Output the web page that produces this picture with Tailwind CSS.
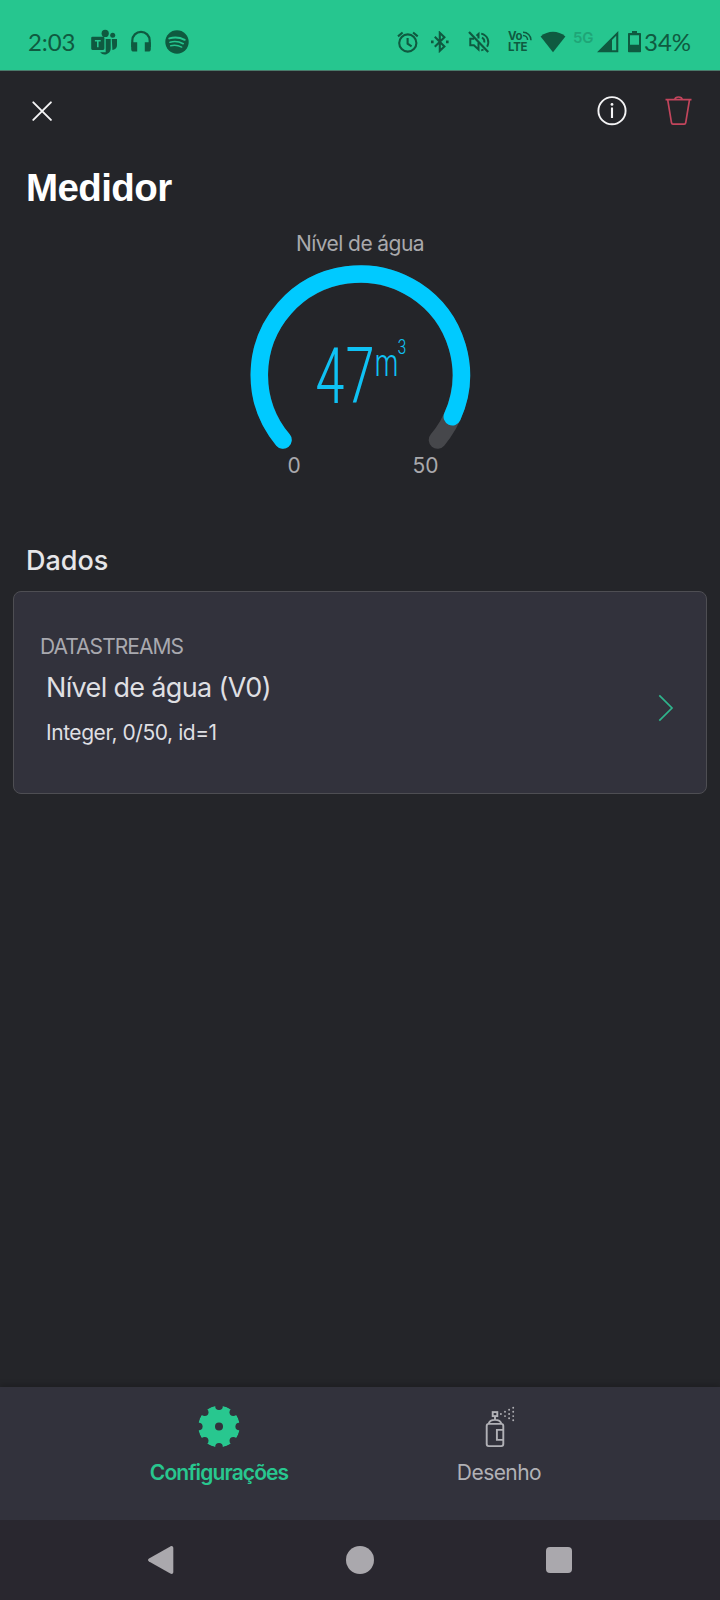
<!DOCTYPE html>
<html lang="pt-BR">
<head>
<meta charset="utf-8">
<meta name="viewport" content="width=device-width, initial-scale=1">
<title>Medidor</title>
<script src="https://cdn.jsdelivr.net/npm/@tailwindcss/browser@4"></script>
</head>
<body class="flex h-[1600px] w-[720px] flex-col overflow-hidden bg-[#242529] font-['Inter',sans-serif]">

  <!-- Status bar -->
  <header class="h-[71px] shrink-0 border-b border-[#4a7a6a] bg-[#26c68f] text-[#0f5a40]">
    <div class="flex h-[70px] items-center pt-[14px] pr-[28px] pl-[28px]">
      <span class="w-[63px] font-['Lato',sans-serif] text-[24px] leading-6 tracking-[-0.1px]">2:03</span>
      <!-- Teams -->
      <svg class="h-7 w-7 shrink-0" viewBox="0 0 28 28" fill="currentColor">
        <circle cx="14.2" cy="5.4" r="3.6"/><circle cx="21.7" cy="7.3" r="2.5"/>
        <path d="M14.7 11h5v10a6 6 0 0 1-10.6 3.2h5.6z"/>
        <path d="M20.8 11H26v6.2a4.6 4.6 0 0 1-4.6 4.8z"/>
        <path fill-rule="evenodd" d="M1.5 8.7h10.6a1.3 1.3 0 0 1 1.3 1.3v10.6a1.3 1.3 0 0 1-1.3 1.3H1.5a1.3 1.3 0 0 1-1.3-1.3V10a1.3 1.3 0 0 1 1.300-1.300zM3.900 12v1.400h2.100v5.900h1.600v-5.900h2.100V12z"/>
      </svg>
      <!-- Headphones -->
      <svg class="ml-[12px] h-7 w-[20px] shrink-0" viewBox="0 0 20 28">
        <path d="M1.300 19V12.500a8.700 8.700 0 0 1 17.400 0V19" fill="none" stroke="currentColor" stroke-width="2.200"/>
        <path d="M0.200 14.200h6v9.300H2.800A2.600 2.600 0 0 1 .2 20.900zM13.800 14.200h6v6.700a2.600 2.600 0 0 1-2.600 2.600h-3.400z" fill="currentColor"/>
      </svg>
      <!-- Spotify -->
      <svg class="ml-[14px] h-6 w-6 shrink-0" viewBox="0 0 24 24">
        <circle cx="12" cy="12" r="11.700" fill="currentColor"/>
        <g fill="none" stroke="#26c68f" stroke-linecap="round"><path d="M4.300 8.400c5-1.500 10.800-1 15.400 1.400" stroke-width="2"/><path d="M5 12.200c4.300-1.200 9.100-.7 13.200 1.500" stroke-width="1.700"/><path d="M5.700 15.800c3.600-.9 7.500-.5 11 1.300" stroke-width="1.400"/></g>
      </svg>
      <div class="flex-1"></div>
      <!-- Alarm -->
      <svg class="h-[22px] w-[22px] shrink-0" viewBox="0 0 22 22" fill="none" stroke="currentColor" stroke-width="2.100">
        <circle cx="10.800" cy="12" r="8.600"/><path d="M10.600 7v5.600l4 2.800M1 5.400l4.600-3.900M20.700 5.400l-4.600-3.900"/>
      </svg>
      <!-- Bluetooth -->
      <svg class="ml-[11px] h-[22px] w-[20px] shrink-0" viewBox="0 0 20 22" fill="none" stroke="currentColor" stroke-width="2.100">
        <path d="M4.800 5.800l9.600 9.600-4.600 4.400V1.800l4.600 4.400-9.600 9.600"/>
        <path d="M1 10.900h2.600M16 10.900h2.600" stroke-width="2.600"/>
      </svg>
      <!-- Muted -->
      <svg class="ml-[17px] h-[22px] w-[24px] shrink-0" viewBox="0 0 24 22" fill="none" stroke="currentColor" stroke-width="2">
        <path d="M2 1L21.200 20.900" stroke-width="2.200"/>
        <path d="M7 7.800H3.300v6.400h3.600l4.600 4.200v-6.700M9.500 4.700l2-1.800v4.600"/>
        <path d="M14.200 2.600c6.700 1.700 8.600 8 5.900 13.200M14.900 6.600c2.100.9 2.700 2.900 2.400 4.900M14.200 19.400c.8-.2 1.600-.5 2.300-.9" stroke-width="1.900"/>
      </svg>
      <!-- VoLTE -->
      <div class="ml-[17px] flex w-[26px] shrink-0 flex-col text-[11.500px] leading-[11px] font-bold">
        <div class="flex"><span class="tracking-[-0.4px]">Vo</span>
          <svg class="h-[10px] w-[10px] shrink-0" viewBox="0 0 10 10" fill="none" stroke="currentColor" stroke-width="1.500"><path d="M1 1.200c4.500 0 8 3.400 8 8M1 4.500c2.600 0 4.600 2 4.600 4.600"/></svg>
        </div>
        <span class="tracking-[-0.300px]">LTE</span>
      </div>
      <!-- Wi-Fi -->
      <svg class="ml-[6px] h-[22px] w-[26px] shrink-0" viewBox="0 0 26 22" fill="currentColor"><path d="M13 21.200L.6 5.400C8-.8 18-.8 25.400 5.400z"/></svg>
      <span class="ml-[7px] w-[21px] shrink-0 pb-[9px] text-[15px] leading-4 font-semibold tracking-[-0.300px] text-[#1fa577]">5G</span>
      <!-- Signal -->
      <svg class="ml-[3px] h-[22px] w-[22px] shrink-0" viewBox="0 0 22 22" fill="currentColor"><path fill-rule="evenodd" d="M0 21.300L21.300 0v21.300zM15 8.900v10.300h4.200V4.700z"/></svg>
      <!-- Battery -->
      <svg class="ml-[9px] h-[22px] w-[13px] shrink-0" viewBox="0 0 13 22" fill="currentColor"><path fill-rule="evenodd" d="M4 0h5v2h3.200a.8.8 0 0 1 .8.8v17.700a.8.8 0 0 1-.8.8H.8a.8.8 0 0 1-.8-.8V2.800A.8.8 0 0 1 .8 2H4zM2 4.200v9.600h9V4.200z"/></svg>
      <span class="ml-[3px] w-[48px] shrink-0 font-['Lato',sans-serif] text-[24px] leading-6">34%</span>
    </div>
  </header>

  <!-- Toolbar -->
  <nav class="flex h-[80px] shrink-0 items-center pr-[28px] pl-[32px]">
    <svg class="h-5 w-5" viewBox="0 0 20 20" fill="none" stroke="#f4f4f5" stroke-width="1.900" stroke-linecap="round"><path d="M1.300 1.300l17.600 17.600M18.900 1.300L1.300 18.900"/></svg>
    <div class="flex-1"></div>
    <svg class="h-[30px] w-[30px]" viewBox="0 0 30 30"><circle cx="15" cy="14.700" r="13.600" fill="none" stroke="#f4f4f5" stroke-width="1.900"/><path d="M15 11.500v10.500" stroke="#f4f4f5" stroke-width="2.100"/><circle cx="15" cy="8.400" r="1.400" fill="#f4f4f5"/></svg>
    <svg class="ml-[37px] h-[30px] w-[28px]" viewBox="0 0 28 30" fill="none" stroke="#c2455c" stroke-width="1.700"><path d="M1.500 3.600h26M3.800 4.400L7.500 26.800c.2.900.6 1.300 1.400 1.300h11.400c.8 0 1.200-.4 1.400-1.300L25.400 4.400M10.800 3.300c.3-1.700 1.600-2.300 3.700-2.300s3.400.6 3.700 2.300"/></svg>
  </nav>

  <h1 class="h-[60px] shrink-0 pt-[13px] pl-[26px] font-['Liberation_Sans',sans-serif] text-[38.500px] leading-[48px] font-bold tracking-[-0.600px] text-white">Medidor</h1>

  <!-- Gauge -->
  <section class="flex h-[320px] shrink-0 flex-col items-center pt-[20px] text-[21px] text-[#a9a9ac]">
    <h2 class="leading-[26px] tracking-[-0.580px]">Nível de água</h2>
    <svg class="h-[197px] w-[260px]" viewBox="230 257 260 197" fill="none">
      <g stroke-width="17.500" stroke-linecap="round">
        <path d="M283 440A101 101 0 1 1 437.500 440" stroke="#46474b"/>
        <path d="M283 440A101 101 0 1 1 452.300 416.700" stroke="#00caff"/>
      </g>
      <g fill="#0fc2f4" font-family="'Roboto Condensed','Roboto',sans-serif">
        <text x="315" y="402.500" font-size="78" font-weight="300" textLength="60" lengthAdjust="spacingAndGlyphs">47</text>
        <text x="374.500" y="375.800" font-size="38" font-weight="300" textLength="24" lengthAdjust="spacingAndGlyphs">m</text>
        <text x="397.500" y="354.300" font-size="20.500" font-weight="300" textLength="9" lengthAdjust="spacingAndGlyphs">3</text>
      </g>
    </svg>
    <div class="flex w-[153px] justify-between pl-[4px] leading-[24px]"><span>0</span><span class="-mr-[2px]">50</span></div>
  </section>

  <!-- Data -->
  <h2 class="mt-[2px] h-[58px] shrink-0 pt-[10px] pl-[26px] text-[27px] leading-[36px] font-medium text-[#e6e6e8]">Dados</h2>
  <section class="mx-[13px] flex h-[203px] shrink-0 items-center rounded-lg border border-[#4e4e53] bg-[#32323c] pr-[32px] pl-[26px]">
    <div class="flex flex-1 flex-col pb-[5px]">
      <h3 class="text-[21px] leading-[28px] tracking-[-0.950px] text-[#a9a9af]">DATASTREAMS</h3>
      <p class="mt-[9px] pl-[6px] text-[27px] leading-[36px] tracking-[-0.660px] text-[#dfdfe2]">Nível de água (V0)</p>
      <p class="mt-[13px] pl-[6px] text-[21px] leading-[28px] tracking-[-0.450px] text-[#dfdfe2]">Integer, 0/50, id=1</p>
    </div>
    <svg class="mt-[30px] h-[28px] w-[16px]" viewBox="0 0 16 28" fill="none" stroke="#2fb48c" stroke-width="1.700"><path d="M1.300 1.300L14 14 1.300 26.700"/></svg>
  </section>

  <div class="flex-1"></div>

  <!-- Tabs -->
  <nav class="flex h-[133px] shrink-0 bg-[#32323c] pt-[19px] pr-[81px] pl-[79px] shadow-[0_-2px_6px_rgba(0,0,0,0.2)]">
    <div class="flex flex-1 flex-col items-center text-[#28c78f]">
      <svg class="h-[42px] w-[42px]" viewBox="-21 -20.500 42 42">
        <defs><mask id="gear"><circle r="20.800" fill="#fff"/><circle r="4" fill="#000"/>
          <g fill="#000"><circle cy="-20.200" r="3.800"/><circle cy="20.200" r="3.800"/><circle cx="20.200" r="3.800"/><circle cx="-20.200" r="3.800"/><circle cx="14.300" cy="-14.300" r="3.800"/><circle cx="14.300" cy="14.300" r="3.800"/><circle cx="-14.300" cy="14.300" r="3.800"/><circle cx="-14.300" cy="-14.300" r="3.800"/></g></mask></defs>
        <circle r="20.800" fill="currentColor" mask="url(#gear)"/>
      </svg>
      <span class="mt-[11px] text-[21px] leading-[28px] font-semibold tracking-[-0.900px]">Configurações</span>
    </div>
    <div class="flex flex-1 flex-col items-center text-[#b1b1b6]">
      <svg class="h-[42px] w-[42px]" viewBox="-.7 -.3 42 42" fill="none" stroke="currentColor" stroke-width="1.900">
        <rect x="8" y="17.600" width="16.600" height="22.200" rx="2"/>
        <path d="M10 17.200c.7-2.500 2.800-3.600 6.300-3.600s5.600 1.100 6.300 3.600M16.300 13.600V9.800M24.300 23.600h-6.100v10h6.100"/>
        <rect x="14" y="5.800" width="4.600" height="4"/>
        <g stroke-linecap="round"><path d="M22.200 7.700h.01M26.300 5.500h.01M26.300 9.800h.01M30.400 3.500h.01M30.400 7.700h.01M30.400 11.900h.01M34.500 1.400h.01M34.500 5.500h.01M34.500 9.800h.01M34.500 14h.01"/></g>
      </svg>
      <span class="mt-[11px] text-[21px] leading-[28px] tracking-[-0.550px]">Desenho</span>
    </div>
  </nav>

  <!-- System navigation -->
  <footer class="flex h-[80px] shrink-0 items-center justify-between bg-[#29272f] pr-[148px] pl-[148px]">
    <svg class="h-7 w-[26px]" viewBox="0 0 26 28" fill="#aaa8ad"><path d="M1 12.400L22.300.4c1.600-.8 3 0 3 1.700v23.800c0 1.700-1.400 2.500-3 1.700L1 15.600C-.3 14.800-.3 13.200 1 12.400z"/></svg>
    <div class="h-7 w-7 rounded-full bg-[#aaa8ad]"></div>
    <div class="h-[26px] w-[26px] rounded-[4px] bg-[#aaa8ad]"></div>
  </footer>
</body>
</html>
